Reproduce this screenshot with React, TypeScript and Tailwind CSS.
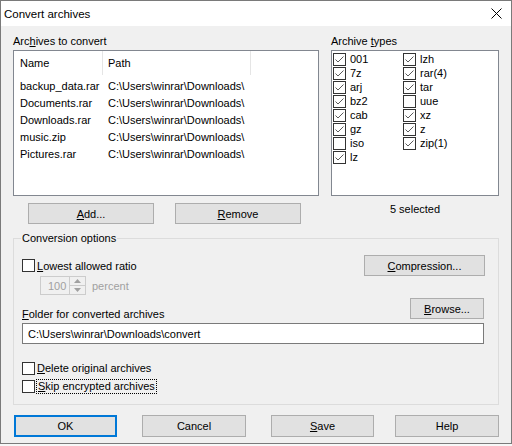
import React from "react";

const FILES = ["backup_data.rar", "Documents.rar", "Downloads.rar", "music.zip", "Pictures.rar"];

const TYPES: { name: string; on: boolean }[] = [
  { name: "001", on: true },
  { name: "7z", on: true },
  { name: "arj", on: true },
  { name: "bz2", on: true },
  { name: "cab", on: true },
  { name: "gz", on: true },
  { name: "iso", on: false },
  { name: "lz", on: true },
  { name: "lzh", on: true },
  { name: "rar(4)", on: true },
  { name: "tar", on: true },
  { name: "uue", on: false },
  { name: "xz", on: true },
  { name: "z", on: true },
  { name: "zip(1)", on: true },
];

function Check({ on = false }: { on?: boolean }) {
  return (
    <span className="flex h-[13px] w-[13px] shrink-0 items-center justify-center border border-[#333333] bg-white">
      {on ? (
        <svg width="11" height="11" viewBox="0 0 11 11">
          <path d="M1.5 5.5 L4 8 L9.5 2.5" fill="none" stroke="#5a5a5a" strokeWidth="1" />
        </svg>
      ) : null}
    </span>
  );
}

function Btn({ w, h = 21, children, primary }: { w: number; h?: number; children: React.ReactNode; primary?: boolean }) {
  return (
    <div
      className={
        "flex shrink-0 items-center justify-center bg-[#e1e1e1] " +
        (primary ? "border-2 border-[#0078d7]" : "border border-[#adadad]")
      }
      style={{ width: w, height: h }}
    >
      {children}
    </div>
  );
}

export default function App() {
  return (
    <div className="h-[446px] w-[512px] bg-[#f7f7f7]">
      <div className="flex h-[444px] w-[512px] flex-col border border-[#7a7a7a] bg-[#f0f0f0] font-['Liberation_Sans',Arial,sans-serif] text-[11px] leading-[14px] text-black">
        {/* title bar */}
        <div className="flex h-[25px] shrink-0 items-center justify-between bg-white pl-[3px] pr-[9px]">
          <span className="text-[11.5px]">Convert archives</span>
          <svg width="11" height="11" viewBox="0 0 11 11">
            <path d="M0.5 0.5 L10.5 10.5 M10.5 0.5 L0.5 10.5" stroke="#000" strokeWidth="1" />
          </svg>
        </div>

        <div className="flex flex-1 flex-col px-[12px]">
          <div className="mt-[6px] flex">
            {/* archives list */}
            <div className="w-[306px]">
              <div className="h-[18px] leading-[18px]">
                Arc<u>h</u>ives to convert
              </div>
              <div className="h-[146px] overflow-hidden border border-[#828790] bg-white">
                <div className="flex h-[24px] items-center">
                  <div className="w-[88px] pl-[6px]">Name</div>
                  <div className="h-full w-px bg-[#e5e5e5]" />
                  <div className="w-[147px] pl-[5px]">Path</div>
                  <div className="h-full w-px bg-[#e5e5e5]" />
                </div>
                <div className="mt-[2px] flex flex-col">
                  {FILES.map((f) => (
                    <div key={f} className="flex h-[17px] items-center">
                      <div className="w-[89px] pl-[6px] whitespace-nowrap">{f}</div>
                      <div className="w-[148px] overflow-hidden pl-[5px] whitespace-nowrap">C:\Users\winrar\Downloads\</div>
                    </div>
                  ))}
                </div>
              </div>
              <div className="mt-[7px] flex gap-[21px] pl-[15px]">
                <Btn w={126}>
                  <span>
                    <u>A</u>dd...
                  </span>
                </Btn>
                <Btn w={126}>
                  <span>
                    <u>R</u>emove
                  </span>
                </Btn>
              </div>
            </div>

            {/* archive types */}
            <div className="ml-[12px] w-[168px]">
              <div className="h-[18px] leading-[18px]">
                Archive <u>t</u>ypes
              </div>
              <div className="h-[146px] border border-[#828790] bg-white pl-px pt-px">
                <div className="grid grid-flow-col grid-cols-[70px_1fr] grid-rows-[repeat(8,14px)]">
                  {TYPES.map((t) => (
                    <div key={t.name} className="flex h-[14px] items-center gap-[4px]">
                      <Check on={t.on} />
                      <span>{t.name}</span>
                    </div>
                  ))}
                </div>
              </div>
              <div className="mt-[6px] text-center">5 selected</div>
            </div>
          </div>

          {/* conversion options */}
          <div className="relative mt-[14px] h-[167px] w-[486px] border border-[#dcdcdc]">
            <span className="absolute -top-[8px] left-[7px] bg-[#f0f0f0] px-px">Conversion options</span>
            <div className="flex flex-col pl-[8px] pr-[13px] pt-[16px]">
              <div className="flex h-[21px] items-center justify-between">
                <div className="flex items-center gap-[2px]">
                  <Check />
                  <span>
                    <u>L</u>owest allowed ratio
                  </span>
                </div>
                <Btn w={121}>
                  <span>
                    <u>C</u>ompression...
                  </span>
                </Btn>
              </div>
              <div className="flex h-[19px] items-center pl-[18px]">
                <div className="flex h-[19px] w-[46px] border border-[#cccccc] bg-[#f0f0f0]">
                  <div className="flex flex-1 items-center pl-[7px] text-[#a0a0a0]">100</div>
                  <div className="flex w-[16px] flex-col border-l border-[#cccccc]">
                    <div className="flex flex-1 items-center justify-center border-b border-[#cccccc]">
                      <svg width="7" height="4" viewBox="0 0 7 4">
                        <path d="M0 4 L3.5 0 L7 4 Z" fill="#a0a0a0" />
                      </svg>
                    </div>
                    <div className="flex flex-1 items-center justify-center">
                      <svg width="7" height="4" viewBox="0 0 7 4">
                        <path d="M0 0 L3.5 4 L7 0 Z" fill="#a0a0a0" />
                      </svg>
                    </div>
                  </div>
                </div>
                <span className="ml-[6px] text-[#a0a0a0]">percent</span>
              </div>
              <div className="mt-[3px] flex items-end justify-between pr-px">
                <span className="mb-[-2px]">
                  <u>F</u>older for converted archives
                </span>
                <Btn w={74}>
                  <span>
                    <u>B</u>rowse...
                  </span>
                </Btn>
              </div>
              <div className="mt-[4px] mr-px flex h-[21px] items-center border border-[#7a7a7a] bg-white pl-[5px]">
                C:\Users\winrar\Downloads\convert
              </div>
              <div className="mt-[15px] flex h-[18px] items-center gap-[2px]">
                <Check />
                <span>
                  <u>D</u>elete original archives
                </span>
              </div>
              <div className="flex h-[18px] items-center gap-px">
                <Check />
                <span className="border border-dotted border-black px-px leading-[13px]">
                  <u>S</u>kip encrypted archives
                </span>
              </div>
            </div>
          </div>

          {/* bottom buttons */}
          <div className="mt-[10px] flex pl-px">
            <Btn w={103} h={22} primary>
              OK
            </Btn>
            <div className="ml-[25px]">
              <Btn w={104} h={22}>
                Cancel
              </Btn>
            </div>
            <div className="ml-[25px]">
              <Btn w={103} h={22}>
                <span>
                  <u>S</u>ave
                </span>
              </Btn>
            </div>
            <div className="ml-[21px]">
              <Btn w={104} h={22}>
                Help
              </Btn>
            </div>
          </div>
        </div>
      </div>
    </div>
  );
}
